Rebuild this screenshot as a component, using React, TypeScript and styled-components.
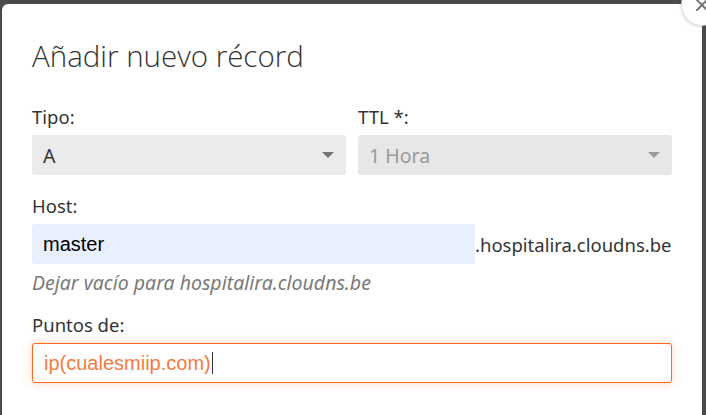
import * as React from "react";
import styled, { createGlobalStyle } from "styled-components";

const GlobalStyle = createGlobalStyle`
  html, body {
    margin: 0;
    padding: 0;
    background: #4b4a4a;
    overflow: hidden;
  }
  * {
    box-sizing: border-box;
  }
`;

const Backdrop = styled.div`
  width: 706px;
  height: 415px;
  padding: 4px 4px 0 2px;
  overflow: hidden;
`;

const Modal = styled.div`
  position: relative;
  width: 700px;
  height: 440px;
  background: #ffffff;
  border-radius: 6px 6px 0 0;
  padding: 32px 30px 0 30px;
  font-family: "Noto Sans", Lato, sans-serif;
  color: #333333;
`;

const CloseButton = styled.div`
  position: absolute;
  top: -19px;
  right: -20px;
  width: 40px;
  height: 40px;
  border-radius: 50%;
  background: #ffffff;
  box-shadow: 0 0 0 1px #dcdcdc, 0 1px 4px rgba(0, 0, 0, 0.2);
  display: flex;
  align-items: center;
  justify-content: center;
  color: #777777;
`;

const Title = styled.h3`
  margin: 0 0 30px 0;
  font-family: "Open Sans", sans-serif;
  font-weight: 300;
  font-size: 29.5px;
  line-height: 40px;
  color: #333333;
`;

const Row = styled.div`
  display: grid;
  grid-template-columns: 1fr 1fr;
  column-gap: 12px;
  margin-bottom: 20px;
`;

const Field = styled.div<{ $gap?: number }>`
  display: flex;
  flex-direction: column;
  margin-bottom: ${({ $gap }) => $gap ?? 0}px;
`;

const Label = styled.label`
  font-size: 18.5px;
  line-height: 22px;
  margin-bottom: 7px;
  color: #333333;
`;

const Select = styled.div<{ $disabled?: boolean }>`
  height: 40px;
  border-radius: 3px;
  background: ${({ $disabled }) => ($disabled ? "#e7e7e7" : "#ebebeb")};
  color: ${({ $disabled }) => ($disabled ? "#9a9a9a" : "#333333")};
  display: flex;
  align-items: center;
  justify-content: space-between;
  padding: 0 12px 0 11px;
  font-size: 19.5px;
`;

const Caret = styled.span<{ $disabled?: boolean }>`
  width: 0;
  height: 0;
  border-left: 6px solid transparent;
  border-right: 6px solid transparent;
  border-top: 6px solid ${({ $disabled }) => ($disabled ? "#9a9a9a" : "#777777")};
`;

const HostLine = styled.div`
  display: flex;
  align-items: center;
`;

const TextInput = styled.div<{ $focused?: boolean; $autofill?: boolean }>`
  height: 40px;
  border-radius: 3px;
  display: flex;
  align-items: center;
  padding: 0 11px;
  font-family: "Liberation Sans", Arial, sans-serif;
  font-size: 20px;
  background: ${({ $autofill }) => ($autofill ? "#e8f0fe" : "#ffffff")};
  color: ${({ $focused }) => ($focused ? "#f47a3e" : "#000000")};
  border: ${({ $focused }) => ($focused ? "1px solid #ff6a1e" : "none")};
  box-shadow: ${({ $focused }) =>
    $focused ? "0 0 8px rgba(255, 110, 40, 0.3)" : "none"};
`;

const HostInput = styled(TextInput)`
  width: 443px;
  flex: none;
`;

const Suffix = styled.span`
  font-size: 18.5px;
  color: #333333;
`;

const Help = styled.div`
  margin-top: 7px;
  font-size: 19.5px;
  line-height: 24px;
  font-style: italic;
  color: #7a7a7a;
`;

const Cursor = styled.span`
  display: inline-block;
  width: 1px;
  height: 22px;
  background: #333333;
  margin-left: 1px;
`;

export default function App() {
  return (
    <>
      <GlobalStyle />
      <Backdrop>
        <Modal>
          <CloseButton>
            <svg width="14" height="14" viewBox="0 0 14 14">
              <path
                d="M2 2 L12 12 M12 2 L2 12"
                stroke="#777"
                strokeWidth="2"
                strokeLinecap="round"
              />
            </svg>
          </CloseButton>
          <Title>Añadir nuevo récord</Title>
          <Row>
            <Field>
              <Label>Tipo:</Label>
              <Select>
                A
                <Caret />
              </Select>
            </Field>
            <Field>
              <Label>TTL *:</Label>
              <Select $disabled>
                1 Hora
                <Caret $disabled />
              </Select>
            </Field>
          </Row>
          <Field $gap={19}>
            <Label>Host:</Label>
            <HostLine>
              <HostInput $autofill>master</HostInput>
              <Suffix>.hospitalira.cloudns.be</Suffix>
            </HostLine>
            <Help>Dejar vacío para hospitalira.cloudns.be</Help>
          </Field>
          <Field>
            <Label>Puntos de:</Label>
            <TextInput $focused>
              ip(cualesmiip.com)
              <Cursor />
            </TextInput>
          </Field>
        </Modal>
      </Backdrop>
    </>
  );
}
